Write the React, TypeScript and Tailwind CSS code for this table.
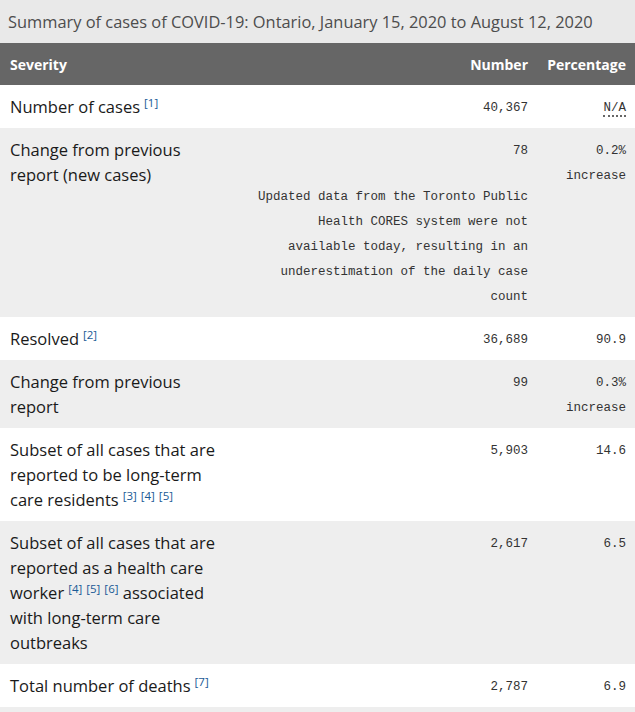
import React from "react";

type Row = {
  label: React.ReactNode;
  number: React.ReactNode;
  pct: React.ReactNode;
};

// preflight already lifts <sup> by 0.5em
const Ref = ({ n }: { n: number }) => (
  <sup className="ml-[4px] text-[11.5px] text-[#1a5a96]">[{n}]</sup>
);

const rows: Row[] = [
  {
    label: (
      <>
        Number of cases
        <Ref n={1} />
      </>
    ),
    number: "40,367",
    pct: (
      <abbr className="no-underline border-b-2 border-dotted border-[#666]" title="Not applicable">
        N/A
      </abbr>
    ),
  },
  {
    label: "Change from previous report (new cases)",
    number: (
      <>
        <div>78</div>
        <p className="ml-auto mt-[21px] max-w-[278px]">
          Updated data from the Toronto Public Health CORES system were not available today,
          resulting in an underestimation of the daily case count
        </p>
      </>
    ),
    pct: "0.2% increase",
  },
  {
    label: (
      <>
        Resolved
        <Ref n={2} />
      </>
    ),
    number: "36,689",
    pct: "90.9",
  },
  { label: "Change from previous report", number: "99", pct: "0.3% increase" },
  {
    label: (
      <>
        Subset of all cases that are reported to be long-term care residents
        <Ref n={3} />
        <Ref n={4} />
        <Ref n={5} />
      </>
    ),
    number: "5,903",
    pct: "14.6",
  },
  {
    label: (
      <>
        Subset of all cases that are reported as a health care worker
        <Ref n={4} />
        <Ref n={5} />
        <Ref n={6} /> associated with long-term care outbreaks
      </>
    ),
    number: "2,617",
    pct: "6.5",
  },
  {
    label: (
      <>
        Total number of deaths
        <Ref n={7} />
      </>
    ),
    number: "2,787",
    pct: "6.9",
  },
  { label: "\u00a0", number: "", pct: "" },
];

const App = () => {
  return (
    <div className="w-[635px] bg-white font-['Open_Sans',sans-serif]">
      <table className="w-full table-fixed border-collapse">
        <caption className="bg-[#e9e9e9] px-2 pt-[10px] pb-[9px] text-left text-[16.4px] leading-[24px] text-[#4d4d4d]">
          Summary of cases of COVID-19: Ontario, January 15, 2020 to August 12, 2020
        </caption>
        <colgroup>
          <col className="w-[232px]" />
          <col className="w-[306px]" />
          <col />
        </colgroup>
        <thead>
          <tr className="bg-[#666666] text-[14px] font-bold text-white">
            <th className="h-[42px] px-[10px] text-left">Severity</th>
            <th className="px-[10px] text-right">Number</th>
            <th className="pr-[9px] text-right">Percentage</th>
          </tr>
        </thead>
        <tbody>
          {rows.map((r, i) => (
            <tr key={i} className={i % 2 === 0 ? "bg-white" : "bg-[#eeeeee]"}>
              <td className="px-[10px] pt-[9px] pb-[9px] align-top text-[16.5px] leading-[25px] text-[#1a1a1a]">
                {r.label}
              </td>
              <td className="px-[10px] pt-[11px] pb-[7px] text-right align-top font-['Liberation_Mono',monospace] text-[12.5px] leading-[25px] text-[#333]">
                {r.number}
              </td>
              <td className="pr-[9px] pl-[10px] pt-[11px] pb-[7px] text-right align-top font-['Liberation_Mono',monospace] text-[12.5px] leading-[25px] text-[#333]">
                {r.pct}
              </td>
            </tr>
          ))}
        </tbody>
      </table>
    </div>
  );
};

export default App;
